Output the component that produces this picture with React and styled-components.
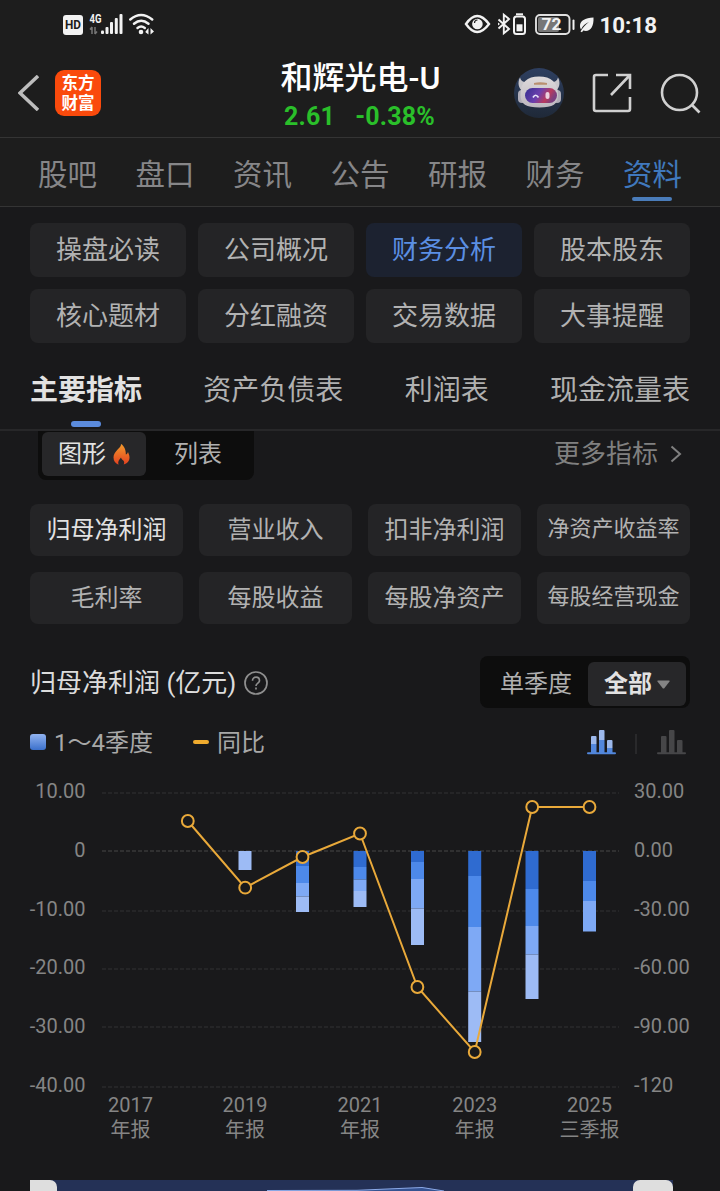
import React from 'react'
import styled, { createGlobalStyle } from 'styled-components'

const GlobalStyle = createGlobalStyle`
  * {
    box-sizing: border-box;
  }
  body {
    margin: 0;
    background: #19191b;
    font-family: Roboto, "Noto Sans CJK SC", sans-serif;
    overflow: hidden;
  }
  svg {
    display: block;
    flex: none;
  }
`

const Page = styled.div`
  width: 720px;
  height: 1191px;
  overflow: hidden;
  background: #19191b;
  display: flex;
  flex-direction: column;
  white-space: nowrap;
`

const TopArea = styled.div`
  background: #1d1d1d;
`

const StatusBar = styled.div`
  height: 50px;
  padding: 0 62px;
  display: flex;
  align-items: center;
  justify-content: space-between;
`

const Header = styled.div`
  height: 88px;
  border-bottom: 1px solid #343434;
  padding: 0 19px 1px 18px;
  display: grid;
  grid-template-columns: 200px 1fr 200px;
`

const HeaderLeft = styled.div`
  display: flex;
  align-items: center;
  gap: 16px;
`

const Logo = styled.div`
  width: 46px;
  height: 46px;
  border-radius: 9px;
  background: #fa4a0c;
  color: #fff;
  display: flex;
  flex-direction: column;
  align-items: center;
  padding-top: 2px;
`

const LogoLine = styled.div`
  height: 20px;
  font-family: "Noto Sans CJK SC", sans-serif;
  font-weight: 700;
  font-size: 16.5px;
  line-height: 20px;
`

const StockTitle = styled.div`
  text-align: center;
  padding-top: 8px;
  margin-left: 2px;
`

const StockName = styled.div`
  color: #fff;
  font-size: 32px;
  line-height: 40px;
  font-weight: 500;
`

const StockPrice = styled.div`
  color: #2abf2a;
  font-size: 25px;
  font-weight: 700;
  line-height: 37px;
  display: flex;
  justify-content: center;
  gap: 20px;
  letter-spacing: 0.2px;
  margin-right: 2px;
`

const HeaderRight = styled.div`
  display: flex;
  align-items: center;
  justify-content: flex-end;
  gap: 28px;
`

const NavTabs = styled.div`
  height: 69px;
  border-bottom: 1px solid #343434;
  padding: 0 38px;
  display: flex;
  justify-content: space-between;
`

const NavTab = styled.div`
  display: flex;
  flex-direction: column;
  align-items: center;
  font-size: 29.5px;
  line-height: 44px;
  padding-top: 15px;
  color: ${p => (p.$active ? '#4079bd' : '#868688')};
  &::after {
    content: '';
    width: 40px;
    height: 4px;
    border-radius: 2px;
    background: ${p => (p.$active ? '#4a7cba' : 'transparent')};
  }
`

const ChipGrid = styled.div`
  display: grid;
  grid-template-columns: repeat(4, 1fr);
  gap: 12px;
  padding: 16px 30px 0;
`

const Chip = styled.div`
  height: 54px;
  border-radius: 8px;
  font-size: 26px;
  line-height: 54px;
  text-align: center;
  background: ${p => (p.$active ? '#1c2230' : '#242426')};
  color: ${p => (p.$active ? '#5b8fe3' : '#b2b2b2')};
`

const SubTabs = styled.div`
  height: 88px;
  border-bottom: 2px solid #272729;
  padding: 0 30px;
  display: flex;
  justify-content: space-between;
`

const SubTab = styled.div`
  display: flex;
  flex-direction: column;
  align-items: center;
  font-size: 28px;
  line-height: 42px;
  padding-top: 27px;
  font-weight: ${p => (p.$active ? 700 : 400)};
  color: ${p => (p.$active ? '#e2e2e2' : '#b0b0b0')};
  &::after {
    content: '';
    width: 30px;
    height: 6px;
    margin-top: 9px;
    border-radius: 3px;
    background: ${p => (p.$active ? '#5b8bdd' : 'transparent')};
  }
`

const ViewRow = styled.div`
  height: 49px;
  padding: 0 38px;
  display: flex;
  justify-content: space-between;
`

const ViewSwitch = styled.div`
  width: 216px;
  height: 49px;
  border-radius: 0 0 8px 8px;
  background: #0d0d0d;
  padding: 1px 4px 4px;
  display: flex;
`

const ViewItem = styled.div`
  width: 104px;
  border-radius: 6px;
  font-size: 24px;
  line-height: 42px;
  display: flex;
  align-items: center;
  justify-content: center;
  gap: 7px;
  background: ${p => (p.$active ? '#272729' : 'transparent')};
  color: ${p => (p.$active ? '#e2e2e2' : '#b0b0b0')};
`

const MoreLink = styled.div`
  display: flex;
  align-items: center;
  gap: 12px;
  color: #808080;
  font-size: 26px;
  line-height: 42px;
  padding-bottom: 3px;
`

const MetricGrid = styled.div`
  display: grid;
  grid-template-columns: repeat(4, 1fr);
  gap: 16px;
  padding: 24px 30px 0;
`

const Metric = styled.div`
  height: 52px;
  border-radius: 8px;
  background: #242426;
  text-align: center;
  line-height: ${p => (p.$small ? 50 : 53)}px;
  font-size: ${p => (p.$small ? 22 : 24)}px;
  color: ${p => (p.$active ? '#e2e2e2' : '#b2b2b2')};
`

const ChartHead = styled.div`
  margin-top: 32px;
  height: 52px;
  padding: 0 30px;
  display: flex;
  justify-content: space-between;
`

const ChartTitle = styled.div`
  display: flex;
  align-items: center;
  gap: 8px;
  color: #dcdcdc;
  font-size: 26px;
  line-height: 52px;
  padding-top: 2px;
`

const PeriodSwitch = styled.div`
  width: 210px;
  height: 52px;
  border-radius: 8px;
  background: #0d0d0d;
  display: flex;
  padding: 6px 4px 2px 0;
`

const Period = styled.div`
  width: ${p => (p.$active ? 98 : 108)}px;
  padding-left: ${p => (p.$active ? 0 : 4)}px;
  height: 44px;
  border-radius: 6px;
  display: flex;
  align-items: center;
  justify-content: center;
  gap: 5px;
  font-size: 24px;
  line-height: 42px;
  font-weight: ${p => (p.$active ? 700 : 400)};
  background: ${p => (p.$active ? '#272729' : 'transparent')};
  color: ${p => (p.$active ? '#e2e2e2' : '#b0b0b0')};
`

const LegendRow = styled.div`
  height: 68px;
  padding: 0 34px 0 30px;
  display: flex;
  align-items: center;
  color: #a8a8a8;
  font-size: 24px;
`

const LegendText = styled.span`
  line-height: 36px;
  padding-top: 2px;
`

const BarKey = styled.i`
  width: 16px;
  height: 16px;
  border-radius: 3px;
  margin-right: 8px;
  background: linear-gradient(#91b3f0, #3b70cc);
`

const LineKey = styled.i`
  width: 16px;
  height: 4px;
  border-radius: 2px;
  margin: 0 8px 0 40px;
  background: #f0ab2e;
`

const StyleIcons = styled.div`
  margin-left: auto;
  display: flex;
  align-items: center;
`

const Divider = styled.i`
  width: 2px;
  height: 20px;
  margin: 4px 20px 0 19px;
  background: #29292b;
`

const RangeBar = styled.div`
  height: 11px;
  margin: 24px 47px 0 30px;
  background: #243156;
  display: flex;
  justify-content: space-between;
`

const RangeHandle = styled.div`
  width: ${p => (p.$first ? 27 : 40)}px;
  height: 11px;
  background: #dedede;
  border-radius: ${p => (p.$first ? '0 7px 0 0' : '7px 7px 0 0')};
`

const navTabs = ['股吧', '盘口', '资讯', '公告', '研报', '财务', '资料']
const chips = ['操盘必读', '公司概况', '财务分析', '股本股东', '核心题材', '分红融资', '交易数据', '大事提醒']
const subTabs = ['主要指标', '资产负债表', '利润表', '现金流量表']
const metrics = ['归母净利润', '营业收入', '扣非净利润', '净资产收益率', '毛利率', '每股收益', '每股净资产', '每股经营现金']

// y positions are relative to the top of the chart (776 on the page)
const gridLines = [
  { y: 17, left: '10.00', right: '30.00' },
  { y: 75, left: '0', right: '0.00' },
  { y: 135, left: '-10.00', right: '-30.00' },
  { y: 193, left: '-20.00', right: '-60.00' },
  { y: 251, left: '-30.00', right: '-90.00' },
  { y: 311, left: '-40.00', right: '-120' },
]
const labelY = [22, 81, 140, 198, 257, 316]

const blues = ['#2f6bd0', '#4d89ea', '#7ea9f5', '#9dbbf5']
const bars = [
  { x: 245, stops: [75, 75, 75, 75, 94] },
  { x: 302.5, stops: [75, 90, 107, 120.5, 136] },
  { x: 360, stops: [75, 91, 103.5, 115, 131] },
  { x: 417.5, stops: [75, 86, 103, 132.5, 169] },
  { x: 474.7, stops: [75, 100, 151, 215.5, 266] },
  { x: 532, stops: [75, 113, 150, 178.5, 223] },
  { x: 589.5, stops: [75, 105, 125, 155.5, 155.5] },
]

const points = [
  [187.8, 45], [245.2, 111.7], [302.5, 81], [360, 57.5],
  [417.4, 211], [474.7, 276], [532.2, 31], [589.5, 31],
]

const years = [
  { x: 130.5, year: '2017', kind: '年报' },
  { x: 245, year: '2019', kind: '年报' },
  { x: 360, year: '2021', kind: '年报' },
  { x: 474.7, year: '2023', kind: '年报' },
  { x: 589.5, year: '2025', kind: '三季报' },
]

function StatusLeft() {
  return (
    <svg width="96" height="26" viewBox="62 12 96 26" fill="#f2f2f2">
      <rect x="63" y="15" width="20" height="20" rx="3" />
      <text x="65" y="29.300" fontSize="12" fontWeight="700" textLength="16" lengthAdjust="spacingAndGlyphs" fill="#1d1d1d">HD</text>
      <text x="89.500" y="23" fontSize="12" fontWeight="700" textLength="12" lengthAdjust="spacingAndGlyphs">4G</text>
      <path d="M92 27v7M92 27l-2 2.4M95 34v-7M95 34l2-2.4" stroke="#777" strokeWidth="1.500" fill="none" />
      <rect x="101" y="30.500" width="3" height="3.500" rx="1" />
      <rect x="105.500" y="27" width="3" height="7" rx="1" />
      <rect x="110" y="22" width="3" height="12" rx="1" />
      <rect x="114.800" y="18" width="3" height="16" rx="1" />
      <rect x="119.500" y="14" width="3" height="20" rx="1" />
      <g fill="none" stroke="#f2f2f2" strokeWidth="2.500" strokeLinecap="round">
        <path d="M130.300 19.500Q141 10.500 152.200 19.500" />
        <path d="M134 23.800Q141.200 17.800 148.500 23.800" />
        <path d="M137.500 27.900Q141.200 25.200 144.800 27.900" />
      </g>
      <circle cx="141" cy="32" r="2.300" />
      <path d="M145.500 31.500l3-3.500v6.500l-3-2.200zM150.500 28v6.500l3.500-3z" />
    </svg>
  )
}

function StatusRight() {
  return (
    <svg width="194" height="30" viewBox="464 10 194 30" fill="#f2f2f2">
      <path d="M466 24Q477 8 489 24Q477 40 466 24Z" fill="none" stroke="#f2f2f2" strokeWidth="2.400" />
      <circle cx="477.400" cy="24" r="5.300" />
      <path d="M474.500 23a3 3 0 0 1 3-3" stroke="#1d1d1d" strokeWidth="1.200" fill="none" />
      <path d="M498.500 19.500l10.500 9.500-5.200 4.200V14.800l5.200 4.200-10.500 9.500" fill="none" stroke="#f2f2f2" strokeWidth="1.900" />
      <path d="M498 22.500l2 1.500-2 1.500z" />
      <rect x="514" y="16.500" width="11" height="17.500" rx="2.500" fill="none" stroke="#f2f2f2" strokeWidth="2" />
      <rect x="516" y="13.300" width="7" height="1.900" />
      <rect x="516.500" y="24.300" width="6" height="7" />
      <rect x="536" y="15" width="33.500" height="19" rx="4" fill="none" stroke="#e0e0e0" strokeWidth="1.900" />
      <rect x="538" y="17" width="21" height="15" rx="2" fill="#777" />
      <rect x="572.500" y="19.500" width="2" height="10.500" rx="1" />
      <text x="541.500" y="30.400" fontSize="16.500" fontWeight="700" textLength="20" lengthAdjust="spacingAndGlyphs">72</text>
      <path d="M593.500 17.500C585 18 580 20.500 580 26c0 1.500.5 2.700 1 3.500 2-4 4.500-6 8-7.500-3 2.300-6 5-8.500 9.500l1.500.8 1.200-1.800C589.500 32.500 594 27.500 593.500 17.500z" />
      <text x="599.500" y="33" fontSize="22.500" fontWeight="700" textLength="57.500" lengthAdjust="spacingAndGlyphs">10:18</text>
    </svg>
  )
}

function Robot() {
  return (
    <svg width="50" height="50" viewBox="0 0 50 50">
      <defs>
        <linearGradient id="visor" x1="0" x2="1" y1="0" y2="0.300">
          <stop offset="0" stopColor="#352f8f" />
          <stop offset="0.500" stopColor="#6b3fae" />
          <stop offset="0.800" stopColor="#b93a5e" />
          <stop offset="1" stopColor="#7b3f7f" />
        </linearGradient>
        <linearGradient id="sky" x1="0" x2="0" y1="0" y2="1">
          <stop offset="0" stopColor="#2e3f60" />
          <stop offset="1" stopColor="#1f2938" />
        </linearGradient>
        <linearGradient id="helmet" x1="0" x2="0" y1="0" y2="1">
          <stop offset="0" stopColor="#dedadb" />
          <stop offset="1" stopColor="#bdb8c0" />
        </linearGradient>
      </defs>
      <circle cx="25" cy="25" r="25" fill="url(#sky)" />
      <path d="M6 9.500C3 15 5 21 8.500 23l6-9.500C10.500 15 7 13.500 6 9.500zM44 9.500C47 15 45 21 41.500 23l-6-9.500c4 1.500 7.500 0 8.500-4z" fill="#c9c7cc" />
      <rect x="4" y="22" width="8" height="13" rx="4" fill="#b0adb8" />
      <rect x="39" y="22" width="8" height="13" rx="4" fill="#b0adb8" />
      <path d="M6.500 27C6.500 14 13 8.500 25 8.500S44 14 44 27c0 9-5 12.500-18.500 12.500S6.500 36 6.500 27z" fill="url(#helmet)" />
      <path d="M20 15q6-1.500 13 0v1.700H20z" fill="#b98f70" />
      <rect x="11" y="20" width="32" height="15" rx="7.500" fill="url(#visor)" />
      <path d="M19 29.500q2.500-4.500 5.500 0" fill="none" stroke="#e9e4f8" strokeWidth="1.700" />
      <rect x="31.500" y="24" width="4" height="7" rx="2" fill="#ecd0e0" />
    </svg>
  )
}

function Chart() {
  return (
    <svg width="720" height="380" viewBox="0 0 720 380">
      {gridLines.map((g, i) => (
        <g key={g.left} fill="#858585" fontSize="20">
          <line x1="102" x2="619" y1={g.y} y2={g.y} stroke={i === 1 ? '#38383a' : '#2a2a2c'} strokeWidth="1.600" strokeDasharray="4 2" />
          <text x="85.500" y={labelY[i]} textAnchor="end">{g.left}</text>
          <text x="634" y={labelY[i]}>{g.right}</text>
        </g>
      ))}
      {bars.map(bar => blues.map((color, i) => (
        <rect key={bar.x + color} x={bar.x - 6.5} y={bar.stops[i]} width="13" height={bar.stops[i + 1] - bar.stops[i]} fill={color} />
      )))}
      <polyline points={points.map(p => p.join(',')).join(' ')} fill="none" stroke="#e9a93a" strokeWidth="2" />
      {points.map(([x, y]) => (
        <circle key={x} cx={x} cy={y} r="5.900" fill="#19191b" stroke="#e9a93a" strokeWidth="2" />
      ))}
      {years.map(item => (
        <g key={item.year} fill="#858585" fontSize="20" textAnchor="middle">
          <text x={item.x} y="336">{item.year}</text>
          <text x={item.x} y="361">{item.kind}</text>
        </g>
      ))}
    </svg>
  )
}

function BarsIcon({ top, bottom, base }) {
  return (
    <svg width="29" height="25" viewBox="0 0 29 25">
      <path d="M4 14V7q0-1 1-1h3.500q1 0 1 1v7zM12 10V1q0-1 1-1h3.500q1 0 1 1v9zM20 18v-7q0-1 1-1h3.500q1 0 1 1v7z" fill={top} />
      <path d="M4 14h5.500v9H4zM12 10h5.500v13H12zM20 18h5.500v5H20z" fill={bottom} />
      <rect y="22.200" width="29" height="2" rx="1" fill={base} />
    </svg>
  )
}

function App() {
  return (
    <Page>
      <GlobalStyle />
      <TopArea>
        <StatusBar>
          <StatusLeft />
          <StatusRight />
        </StatusBar>
        <Header>
          <HeaderLeft>
            <svg width="21" height="36" viewBox="0 0 21 36">
              <path d="M20 1L2 18l18 17" fill="none" stroke="#bdbdbd" strokeWidth="3.500" />
            </svg>
            <Logo>
              <LogoLine>东方</LogoLine>
              <LogoLine>财富</LogoLine>
            </Logo>
          </HeaderLeft>
          <StockTitle>
            <StockName>和辉光电-U</StockName>
            <StockPrice>
              <span>2.61</span>
              <span>-0.38%</span>
            </StockPrice>
          </StockTitle>
          <HeaderRight>
            <Robot />
            <svg width="40" height="40" viewBox="0 0 40 40" fill="none" stroke="#d0d0d0" strokeWidth="2.600">
              <path d="M16 2H4Q2 2 2 4v32q0 2 2 2h32q2 0 2-2V24M24 2h14v14M38 2L19 22" />
            </svg>
            <svg width="41" height="41" viewBox="0 0 41 41" fill="none" stroke="#d0d0d0" strokeWidth="2.600">
              <circle cx="19.500" cy="19.500" r="17.500" />
              <path d="M31.500 31.500l8 8" />
            </svg>
          </HeaderRight>
        </Header>
        <NavTabs>
          {navTabs.map(tab => (
            <NavTab key={tab} $active={tab === '资料'}>{tab}</NavTab>
          ))}
        </NavTabs>
      </TopArea>
      <ChipGrid>
        {chips.map(chip => (
          <Chip key={chip} $active={chip === '财务分析'}>{chip}</Chip>
        ))}
      </ChipGrid>
      <SubTabs>
        {subTabs.map((tab, i) => (
          <SubTab key={tab} $active={i === 0}>{tab}</SubTab>
        ))}
      </SubTabs>
      <ViewRow>
        <ViewSwitch>
          <ViewItem $active>
            图形
            <svg width="17" height="21" viewBox="0 0 17 21">
              <defs>
                <linearGradient id="fire" x1="0" x2="0" y1="0" y2="1">
                  <stop offset="0" stopColor="#f29a2c" />
                  <stop offset="1" stopColor="#e34020" />
                </linearGradient>
              </defs>
              <path d="M8 0c.5 4-7.500 7-7.500 13.500 0 3.500 2 6 5 7.200-1-3 .5-5 2.500-7.200.3 2 2.500 2.500 3 4 .3 1 .2 2.200-.3 3 3.500-.8 5.800-3.500 5.800-7 0-2.500-1-4-1.500-5.500-.5 1.500-1.200 2.200-2.200 2.500C13 6.500 11.500 2 8 0z" fill="url(#fire)" />
            </svg>
          </ViewItem>
          <ViewItem>列表</ViewItem>
        </ViewSwitch>
        <MoreLink>
          更多指标
          <svg width="12" height="18" viewBox="0 0 12 18">
            <path d="M1.500 1.500L10 9l-8.500 7.500" fill="none" stroke="#808080" strokeWidth="2" />
          </svg>
        </MoreLink>
      </ViewRow>
      <MetricGrid>
        {metrics.map((name, i) => (
          <Metric key={name} $active={i === 0} $small={name.length > 5}>{name}</Metric>
        ))}
      </MetricGrid>
      <ChartHead>
        <ChartTitle>
          归母净利润 (亿元)
          <svg width="24" height="24" viewBox="0 0 24 24" fill="none" stroke="#8f8f8f" strokeWidth="1.700">
            <circle cx="12" cy="12" r="11" />
            <path d="M8.500 9.700c0-4.700 7-4.700 7 0 0 2.500-3.500 2.300-3.500 5.300M12 16.500v2" />
          </svg>
        </ChartTitle>
        <PeriodSwitch>
          <Period>单季度</Period>
          <Period $active>
            全部
            <svg width="13" height="9" viewBox="0 0 13 9">
              <path d="M1 .5h11q1 0 .5 1L7.500 8q-1 1-2 0L.5 1.500Q0 .5 1 .5z" fill="#848484" />
            </svg>
          </Period>
        </PeriodSwitch>
      </ChartHead>
      <LegendRow>
        <BarKey />
        <LegendText>1～4季度</LegendText>
        <LineKey />
        <LegendText>同比</LegendText>
        <StyleIcons>
          <BarsIcon top="#9db9ec" bottom="#5287dc" base="#5287dc" />
          <Divider />
          <BarsIcon top="#464648" bottom="#464648" base="#464648" />
        </StyleIcons>
      </LegendRow>
      <Chart />
      <RangeBar>
        <RangeHandle $first />
        <svg width="576" height="11" viewBox="0 0 576 11">
          <path d="M210 10.500l90-.2L365 7.500l22 3.500H210z" fill="#355391" />
          <path d="M210 10.500l90-.2L365 7.500l22 3.500" fill="none" stroke="#8ba9e6" strokeWidth="1" />
        </svg>
        <RangeHandle />
      </RangeBar>
    </Page>
  )
}

export default App
